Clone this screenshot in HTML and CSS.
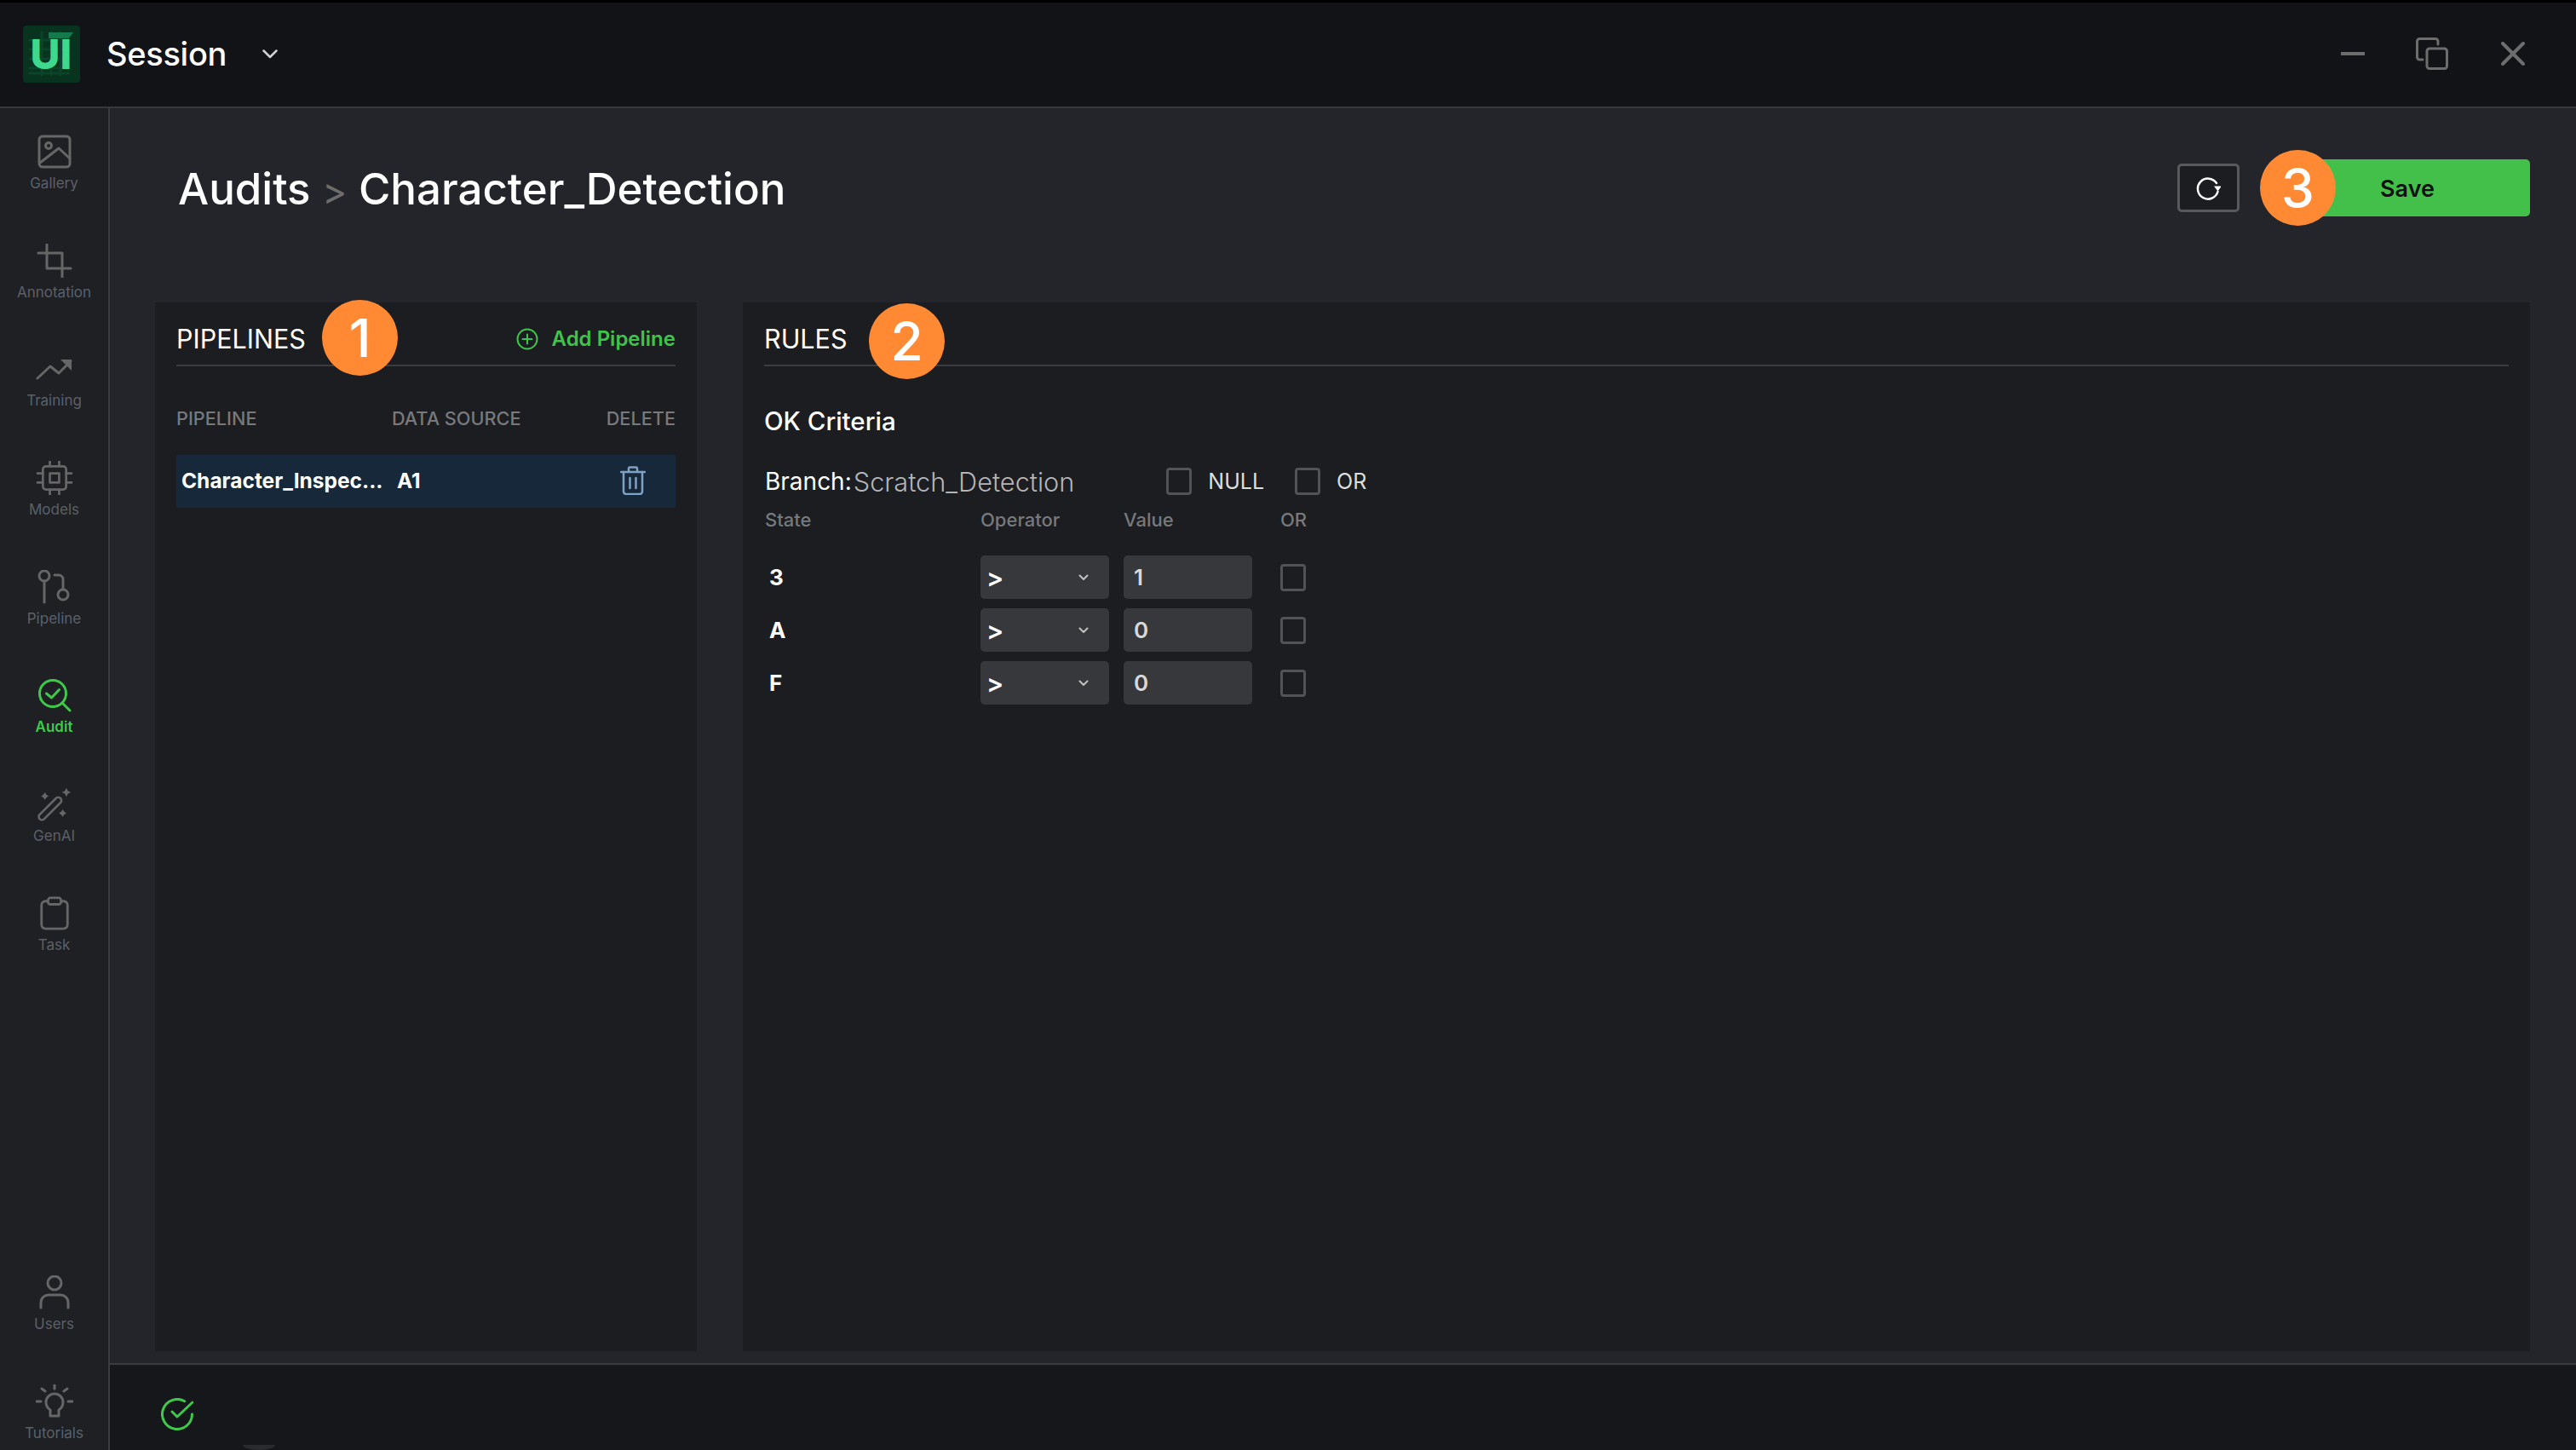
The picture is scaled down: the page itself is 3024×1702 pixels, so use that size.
FILE: index.html
```html
<!DOCTYPE html>
<html lang="en">
<head>
    <meta charset="UTF-8">
    <title>Audits - Character_Detection</title>
    <link rel="stylesheet" href="styles.css">
</head>
<body>
    <div class="app">
        <header class="titlebar">
            <svg class="logo" viewBox="0 0 67 67">
                <rect width="67" height="67" rx="4" fill="#07331f"/>
                <path d="M8 17h46M8 28h46M8 39h46M8 50h46M8 56h46M22 8v50M33 8v50M44 8v50" stroke="#0b4429" stroke-width="3"/>
                <path d="M30 8h29l-5 7H30z" fill="#157a4b"/>
                <text x="8.500" y="51" class="logo-text">UI</text>
            </svg>
            <span class="session">Session</span>
            <svg class="session-arrow" viewBox="0 0 18 11"><path d="M1.500 1.500 9 9l7.500-7.500"/></svg>
            <div class="window-btns">
                <svg class="win-min" viewBox="0 0 28 4"><path d="M0 2h28"/></svg>
                <svg class="win-max" viewBox="0 0 38 38"><rect x="13" y="13" width="23.500" height="23.500" rx="3"/><path d="M8 26H4.500a3 3 0 0 1-3-3V4.500a3 3 0 0 1 3-3H23a3 3 0 0 1 3 3V8"/></svg>
                <svg class="win-close" viewBox="0 0 28 28"><path d="M2 2l24 24M26 2 2 26"/></svg>
            </div>
        </header>

        <div class="body-row">
            <nav class="sidebar">
                <div class="nav-group">
                    <a class="nav-item">
                        <svg viewBox="0 0 40 40"><rect x="2" y="2" width="36" height="36" rx="4"/><circle cx="13" cy="13" r="3.500"/><path d="M3 33 25 16l13 12"/></svg>
                        <span>Gallery</span>
                    </a>
                    <a class="nav-item">
                        <svg viewBox="0 0 40 40"><path d="M11 1v28h28"/><path d="M1 11h28v28"/></svg>
                        <span>Annotation</span>
                    </a>
                    <a class="nav-item">
                        <svg viewBox="0 0 44 28"><path d="M2 25 17 11l10 8L41 5"/><path d="M29 3h13v13z" class="solid"/></svg>
                        <span>Training</span>
                    </a>
                    <a class="nav-item">
                        <svg viewBox="0 0 44 44"><rect x="7" y="7" width="30" height="30" rx="4"/><rect x="16" y="16" width="12" height="12"/><path d="M16 0v7M28 0v7M16 37v7M28 37v7M0 16h7M0 28h7M37 16h7M37 28h7"/></svg>
                        <span>Models</span>
                    </a>
                    <a class="nav-item">
                        <svg viewBox="0 0 40 40"><circle cx="8" cy="7" r="6"/><path d="M8 13v25"/><circle cx="30" cy="29" r="6"/><path d="M20 6h5a5 5 0 0 1 5 5v12"/></svg>
                        <span>Pipeline</span>
                    </a>
                    <a class="nav-item active">
                        <svg viewBox="0 0 40 40"><circle cx="18" cy="18" r="15.500"/><path d="M10.500 18l6 5 9-9.500"/><path d="M29 29l9 9"/></svg>
                        <span>Audit</span>
                    </a>
                    <a class="nav-item">
                        <svg viewBox="0 0 46 46"><path d="M3 37 25 15a4 4 0 0 1 6 6L9 43a4 4 0 0 1-6-6z"/><path d="M39 1l2 4 4 2-4 2-2 4-2-4-4-2 4-2zM10 7l2 3 3 2-3 2-2 3-2-3-3-2 3-2zM34 30l2 3 3 2-3 2-2 3-2-3-3-2 3-2z" class="solid"/></svg>
                        <span>GenAI</span>
                    </a>
                    <a class="nav-item">
                        <svg viewBox="0 0 36 42"><rect x="2" y="6" width="32" height="34" rx="5"/><rect x="10" y="2" width="16" height="8" rx="3" class="clip"/></svg>
                        <span>Task</span>
                    </a>
                </div>
                <div class="nav-group">
                    <a class="nav-item">
                        <svg viewBox="0 0 36 40"><circle cx="18" cy="9" r="8"/><path d="M2 38v-6a9 9 0 0 1 9-9h14a9 9 0 0 1 9 9v6"/></svg>
                        <span>Users</span>
                    </a>
                    <a class="nav-item">
                        <svg viewBox="0 0 42 40"><path d="M21 0v5M6 5l4 3M36 5l-4 3M0 20h5M37 20h5"/><path d="M16 37v-7c-3-2-5-5-5-9a10 10 0 0 1 20 0c0 4-2 7-5 9v7z"/></svg>
                        <span>Tutorials</span>
                    </a>
                </div>
            </nav>

            <div class="main-col">
                <main class="main">
                    <div class="page-header">
                        <h1 class="crumbs">Audits <span class="crumb-sep">&gt;</span> Character_Detection</h1>
                        <div class="actions">
                            <button class="refresh-btn">
                                <svg viewBox="0 0 30 30"><path d="M26.500 19A12 12 0 1 1 25 9"/><path d="M22 12.500h9l-4.500 6z" class="solid"/></svg>
                            </button>
                            <button class="save-btn">Save</button>
                            <span class="badge badge-save">3</span>
                        </div>
                    </div>

                    <div class="panels">
                        <section class="panel panel-pipelines">
                            <span class="badge badge-pipelines">1</span>
                            <div class="panel-head">
                                <h2>PIPELINES</h2>
                                <a class="add-link">
                                    <svg viewBox="0 0 26 26"><circle cx="13" cy="13" r="11.500"/><path d="M13 7.500v11M7.500 13h11"/></svg>
                                    Add Pipeline
                                </a>
                            </div>
                            <div class="pipe-cols">
                                <span>PIPELINE</span>
                                <span>DATA SOURCE</span>
                                <span>DELETE</span>
                            </div>
                            <div class="pipe-row">
                                <span class="pipe-name">Character_Inspec...</span>
                                <span>A1</span>
                                <svg class="trash" viewBox="0 0 30 34"><path d="M1 7h28M10 7V3a1.500 1.500 0 0 1 1.500-1.500h7A1.500 1.500 0 0 1 20 3v4"/><path d="M4 7v23a3 3 0 0 0 3 3h16a3 3 0 0 0 3-3V7"/><path d="M11.500 14v12M18.500 14v12"/></svg>
                            </div>
                        </section>

                        <section class="panel panel-rules">
                            <span class="badge badge-rules">2</span>
                            <div class="panel-head">
                                <h2>RULES</h2>
                            </div>
                            <h3 class="criteria">OK Criteria</h3>
                            <div class="branch-row">
                                <span class="branch-label">Branch:</span>
                                <span class="branch-name">Scratch_Detection</span>
                                <span class="check check-null"></span>
                                <span class="check-text">NULL</span>
                                <span class="check check-or"></span>
                                <span class="check-text">OR</span>
                            </div>
                            <div class="rule-grid rule-cols">
                                <span>State</span>
                                <span>Operator</span>
                                <span>Value</span>
                                <span>OR</span>
                            </div>
                            <div class="rule-grid rule-row">
                                <span class="state">3</span>
                                <div class="field op">&gt;<svg viewBox="0 0 12 8"><path d="M1.500 1.500 6 6l4.500-4.500"/></svg></div>
                                <div class="field">1</div>
                                <span class="check"></span>
                            </div>
                            <div class="rule-grid rule-row">
                                <span class="state">A</span>
                                <div class="field op">&gt;<svg viewBox="0 0 12 8"><path d="M1.500 1.500 6 6l4.500-4.500"/></svg></div>
                                <div class="field">0</div>
                                <span class="check"></span>
                            </div>
                            <div class="rule-grid rule-row">
                                <span class="state">F</span>
                                <div class="field op">&gt;<svg viewBox="0 0 12 8"><path d="M1.500 1.500 6 6l4.500-4.500"/></svg></div>
                                <div class="field">0</div>
                                <span class="check"></span>
                            </div>
                        </section>
                    </div>
                </main>

                <footer class="statusbar">
                    <svg viewBox="0 0 38 38"><path d="M27.700 3.800A17.500 17.500 0 1 0 36.500 19"/><path d="M13 16l6 6L37 5"/></svg>
                    <span class="status-tab"></span>
                </footer>
            </div>
        </div>
    </div>
</body>
</html>
```

FILE: styles.css
```css
* {
    box-sizing: border-box;
}
html, body {
    margin: 0;
    padding: 0;
    background: #23252a;
}
body {
    font-family: Inter, "Liberation Sans", sans-serif;
    color: #fff;
}
h1, h2, h3 {
    margin: 0;
    font-weight: 400;
}
svg {
    display: block;
    fill: none;
    stroke-linecap: round;
    stroke-linejoin: round;
}
.app {
    width: 3024px;
    height: 1702px;
    display: flex;
    flex-direction: column;
    overflow: hidden;
}

/* title bar */
.titlebar {
    height: 127px;
    flex: none;
    display: flex;
    align-items: center;
    padding: 0 60px 2px 27px;
    background: #111317;
    border-top: 3px solid #000;
    border-bottom: 2px solid #35373b;
}
.logo {
    width: 67px;
    height: 67px;
}
.logo-text {
    font-family: Inter, sans-serif;
    font-size: 48px;
    font-weight: 800;
    fill: #3fd98e;
}
.session {
    margin-left: 31px;
    font-size: 38px;
    font-weight: 500;
    letter-spacing: -0.3px;
}
.session-arrow {
    width: 18px;
    height: 11px;
    margin-left: 42px;
    stroke: #d0d0d0;
    stroke-width: 2.500;
}
.window-btns {
    margin-left: auto;
    display: flex;
    align-items: center;
    gap: 60px;
}
.win-min {
    width: 28px;
    height: 4px;
    stroke: #6d6d6d;
    stroke-width: 4;
}
.win-max {
    width: 38px;
    height: 38px;
    stroke: #6d6d6d;
    stroke-width: 3;
}
.win-close {
    width: 28px;
    height: 28px;
    margin-left: 2px;
    stroke: #6d6d6d;
    stroke-width: 4;
}

.body-row {
    flex: 1;
    min-height: 0;
    display: flex;
}

/* left nav */
.sidebar {
    width: 129px;
    flex: none;
    display: flex;
    flex-direction: column;
    justify-content: space-between;
    padding: 31px 0 10px;
    background: #1e2024;
    border-right: 2px solid #3a3c40;
}
.nav-group {
    display: flex;
    flex-direction: column;
    gap: 60.700px;
}
.nav-item {
    height: 67px;
    display: flex;
    flex-direction: column;
    align-items: center;
    font-size: 17px;
    color: #5b6068;
}
.nav-item svg {
    height: 40px;
    width: 44px;
    stroke: #666;
    stroke-width: 3;
}
.nav-item svg .solid {
    fill: #666;
    stroke: none;
}
.nav-item svg .clip {
    fill: #1e2024;
}
.nav-item span {
    margin-top: 7px;
    line-height: 20px;
}
.nav-item.active {
    color: #3ec94a;
    font-weight: 600;
}
.nav-item.active svg {
    stroke: #3ec94a;
}

/* main */
.main-col {
    flex: 1;
    min-width: 0;
    display: flex;
    flex-direction: column;
}
.main {
    flex: 1;
    min-height: 0;
    display: flex;
    flex-direction: column;
    padding: 0 54px 14px 53px;
}
.page-header {
    height: 228px;
    flex: none;
    display: flex;
    justify-content: space-between;
    align-items: flex-start;
    padding: 60px 0 0 27px;
}
.crumbs {
    padding-top: 1px;
    font-size: 51px;
    font-weight: 500;
    line-height: 67px;
}
.crumb-sep {
    color: #6d6d6d;
    font-size: 44px;
    font-weight: 400;
}
.actions {
    position: relative;
    display: flex;
    align-items: center;
    gap: 53px;
}
.refresh-btn {
    width: 73px;
    height: 57px;
    padding: 0 2px 0 0;
    display: flex;
    align-items: center;
    justify-content: center;
    background: #1b1d21;
    border: 3px solid #57595c;
    border-radius: 5px;
}
.refresh-btn svg {
    width: 30px;
    height: 30px;
    stroke: #fff;
    stroke-width: 2.500;
}
.refresh-btn .solid {
    fill: #fff;
    stroke: none;
}
.save-btn {
    width: 288px;
    height: 67px;
    padding: 2px 0 0;
    font-family: inherit;
    font-size: 27px;
    font-weight: 600;
    color: #111;
    background: #43c04a;
    border: none;
    border-radius: 5px;
}
.badge {
    position: absolute;
    width: 89px;
    height: 89px;
    display: flex;
    align-items: center;
    justify-content: center;
    font-size: 62px;
    font-weight: 500;
    color: #fff;
    background: #ff8a33;
    border-radius: 50%;
}
.badge-save {
    left: 97px;
    top: -11px;
}
.badge-pipelines {
    left: 196px;
    top: -3px;
}
.badge-rules {
    left: 148px;
    top: 1px;
}

.panels {
    flex: 1;
    min-height: 0;
    display: flex;
    gap: 54px;
}
.panel {
    position: relative;
    padding: 0 25px 0 25px;
    background: #1b1d21;
}
.panel-pipelines {
    width: 636px;
    flex: none;
}
.panel-rules {
    flex: 1;
}
.panel-head {
    height: 75px;
    display: flex;
    align-items: center;
    justify-content: space-between;
    padding-top: 12px;
    border-bottom: 2px solid #3a3c40;
}
.panel-head h2 {
    font-size: 30.500px;
    font-weight: 400;
}
.add-link {
    display: flex;
    align-items: center;
    gap: 16px;
    font-size: 24px;
    font-weight: 600;
    color: #3fc44a;
}
.add-link svg {
    width: 26px;
    height: 26px;
    stroke: #3fc44a;
    stroke-width: 2;
}
.pipe-cols {
    display: grid;
    grid-template-columns: 253px 1fr auto;
    margin-top: 48px;
    font-size: 21.700px;
    font-weight: 500;
    line-height: 26px;
    color: #77797c;
}
.pipe-row {
    height: 62px;
    margin-top: 30px;
    display: grid;
    grid-template-columns: 253px 1fr auto;
    align-items: center;
    padding: 0 35px 3px 6px;
    background: #16283a;
    font-size: 24.500px;
    font-weight: 700;
}
.trash {
    width: 30px;
    height: 34px;
    stroke: #7fa1c4;
    stroke-width: 2.500;
}
.criteria {
    margin-top: 46px;
    font-size: 29.500px;
    font-weight: 500;
    line-height: 36px;
}
.branch-row {
    display: flex;
    align-items: center;
    height: 32px;
    margin-top: 37px;
    padding-left: 1px;
    font-size: 28px;
}
.branch-name {
    margin-left: 2px;
    font-size: 30.700px;
    font-weight: 300;
    color: #b5b5b5;
}
.check {
    width: 30px;
    height: 32px;
    display: block;
    border: 3px solid #515356;
    border-radius: 4px;
}
.check-null {
    margin-left: 108px;
}
.check-or {
    margin-left: 36px;
}
.check-text {
    margin-left: 19px;
    font-size: 25px;
    color: #ddd;
}
.rule-grid {
    display: grid;
    grid-template-columns: 253px 168px 184px auto;
    align-items: center;
    padding-left: 1px;
}
.rule-cols {
    margin-top: 16px;
    font-size: 22px;
    font-weight: 500;
    line-height: 26px;
    color: #77797c;
}
.rule-row {
    height: 51px;
    margin-top: 11px;
}
.rule-cols + .rule-row {
    margin-top: 29px;
}
.state {
    padding-left: 5px;
    font-size: 26px;
    font-weight: 700;
}
.field {
    width: 151px;
    height: 51px;
    display: flex;
    align-items: center;
    justify-content: space-between;
    padding: 0 24px 0 12px;
    background: #37383b;
    border-radius: 5px;
    font-size: 26px;
    font-weight: 600;
    color: #d8d8d8;
}
.field.op {
    padding-left: 7px;
    color: #fff;
    font-size: 30px;
}
.field svg {
    width: 12px;
    height: 8px;
    stroke: #c0c0c0;
    stroke-width: 2;
}

/* bottom bar */
.statusbar {
    position: relative;
    height: 102px;
    flex: none;
    padding: 39px 0 0 60px;
    background: #15171b;
    border-top: 2px solid #3a3c40;
}
.statusbar svg {
    width: 38px;
    height: 38px;
    stroke: #3ec94a;
    stroke-width: 3;
}
.status-tab {
    position: absolute;
    left: 156px;
    bottom: 0;
    width: 38px;
    height: 6px;
    background: #2a2b2e;
    border-radius: 0 0 19px 19px / 0 0 6px 6px;
}
```
